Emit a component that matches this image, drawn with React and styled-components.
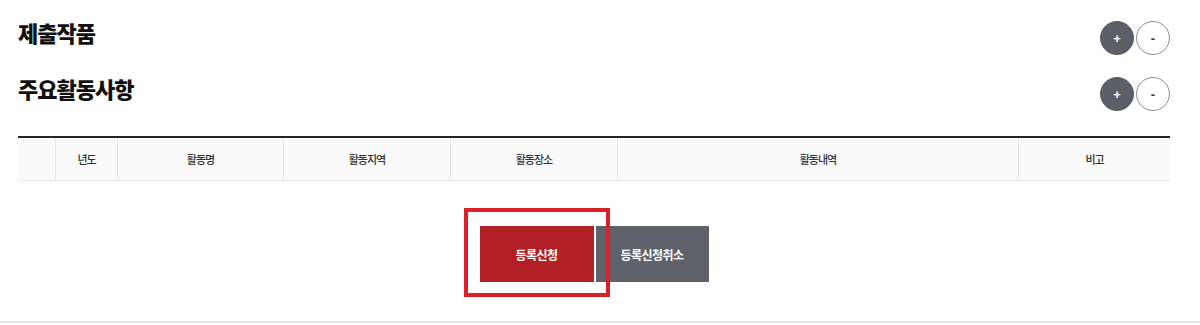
import React from 'react';
import styled, { createGlobalStyle } from 'styled-components';

const GlobalStyle = createGlobalStyle`
    body {
        margin: 0;
        background: #fff;
        font-family: "Noto Sans CJK KR", "Noto Sans", sans-serif;
        color: #222;
    }
`;

const Page = styled.div`
    width: 1200px;
    height: 323px;
    box-sizing: border-box;
    border-bottom: 2px solid #e6e6e6;
    overflow: hidden;
`;

const Content = styled.div`
    padding: 21px 30px 0 18px;
`;

const SectionRow = styled.div`
    display: flex;
    justify-content: space-between;
    align-items: flex-start;
    height: 34px;
    margin-bottom: ${props => props.gap}px;
`;

const Title = styled.h2`
    margin: 0;
    font-size: 22px;
    line-height: 22px;
    font-weight: 900;
    letter-spacing: -1px;
    color: #111;
`;

const Controls = styled.div`
    display: flex;
    gap: 2px;
`;

const RoundButton = styled.button`
    width: 34px;
    height: 34px;
    border-radius: 50%;
    padding: 0;
    display: flex;
    align-items: center;
    justify-content: center;
    font-family: "Liberation Sans", sans-serif;
    font-size: 13px;
    font-weight: 700;
    cursor: pointer;
    border: 1px solid ${props => (props.dark ? '#5c5f68' : '#8d8d8d')};
    background: ${props => (props.dark ? '#5c5f68' : '#fff')};
    color: ${props => (props.dark ? '#fff' : '#333')};
`;

const Table = styled.div`
    display: grid;
    grid-template-columns: 37px 62px 166px 167px 167px 401px 152px;
    border-top: 2px solid #262626;
    border-bottom: 1px solid #e6e6e6;
    background: #fafafa;
`;

const HeadCell = styled.div`
    height: 42px;
    display: flex;
    align-items: center;
    justify-content: center;
    font-size: 11px;
    font-weight: 500;
    letter-spacing: -1px;
    color: #333;
    border-left: ${props => (props.first ? 'none' : '1px solid #e6e6e6')};
`;

const ButtonRow = styled.div`
    display: flex;
    justify-content: center;
    gap: 2px;
    margin-top: 45px;
`;

const Highlight = styled.div`
    position: relative;
`;

const Marker = styled.div`
    position: absolute;
    top: -18px;
    left: -16px;
    right: -16px;
    bottom: -15px;
    border: 4px solid #dc1f28;
    pointer-events: none;
`;

const ActionButton = styled.button`
    width: ${props => props.w}px;
    height: 56px;
    border: none;
    padding: 0;
    font-family: "Noto Sans CJK KR", sans-serif;
    font-size: 12px;
    font-weight: 700;
    letter-spacing: -0.5px;
    color: #fff;
    background: ${props => props.bg};
    cursor: pointer;
`;

const columns = ['', '년도', '활동명', '활동지역', '활동장소', '활동내역', '비고'];

function Section({ title, gap }) {
    return (
        <SectionRow gap={gap}>
            <Title>{title}</Title>
            <Controls>
                <RoundButton dark>+</RoundButton>
                <RoundButton>-</RoundButton>
            </Controls>
        </SectionRow>
    );
}

export default function App() {
    return (
        <>
            <GlobalStyle />
            <Page>
                <Content>
                    <Section title="제출작품" gap={22} />
                    <Section title="주요활동사항" gap={25} />
                    <Table>
                        {columns.map((c, i) => (
                            <HeadCell key={i} first={i === 0}>{c}</HeadCell>
                        ))}
                    </Table>
                    <ButtonRow>
                        <Highlight>
                            <ActionButton w={114} bg="#b21f24">등록신청</ActionButton>
                            <Marker />
                        </Highlight>
                        <ActionButton w={113} bg="#5f626a">등록신청취소</ActionButton>
                    </ButtonRow>
                </Content>
            </Page>
        </>
    );
}
